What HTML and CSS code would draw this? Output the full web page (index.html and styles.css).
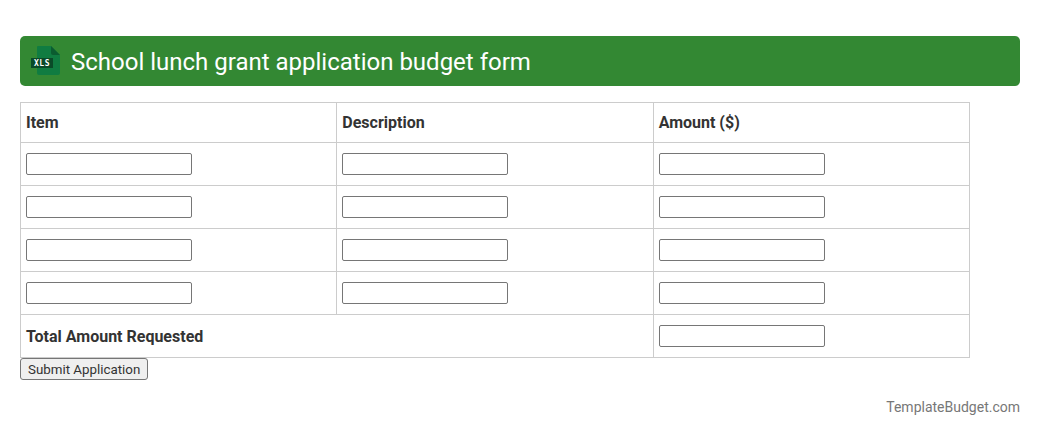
FILE: index.html
```html
<!DOCTYPE html>
<html lang="en">
<head>
    <meta charset="UTF-8">
    <meta name="viewport" content="width=device-width, initial-scale=1.0">
    <title>School lunch grant application budget form</title>
    <link rel="stylesheet" href="styles.css">
</head>
<body>

<div class="container">
    <div class="banner">
        <svg class="file-icon" width="32" height="32" viewBox="0 0 32 32" aria-hidden="true">
            <path d="M8 1H21L30 10V28Q30 30 28 30H9Q7 30 7 28V2Q7 1 8 1Z" fill="#107c41"/>
            <path d="M21 1L30 10H23Q21 10 21 8Z" fill="#0b5c30"/>
            <rect x="1" y="13" width="22" height="10" fill="#0a4a28"/>
            <text x="12" y="20.5" class="file-icon-text" text-anchor="middle">XLS</text>
        </svg>
        <h1>School lunch grant application budget form</h1>
    </div>

    <form>
        <table>
            <tr>
                <th>Item</th>
                <th>Description</th>
                <th>Amount ($)</th>
            </tr>
            <tr>
                <td><input type="text"></td>
                <td><input type="text"></td>
                <td><input type="text"></td>
            </tr>
            <tr>
                <td><input type="text"></td>
                <td><input type="text"></td>
                <td><input type="text"></td>
            </tr>
            <tr>
                <td><input type="text"></td>
                <td><input type="text"></td>
                <td><input type="text"></td>
            </tr>
            <tr>
                <td><input type="text"></td>
                <td><input type="text"></td>
                <td><input type="text"></td>
            </tr>
            <tr>
                <th colspan="2">Total Amount Requested</th>
                <td><input type="text"></td>
            </tr>
        </table>
        <button type="button">Submit Application</button>
    </form>

    <div class="footer">TemplateBudget.com</div>
</div>

</body>
</html>
```

FILE: styles.css
```css
body {
    margin: 0;
    font-family: Roboto, sans-serif;
    font-size: 16px;
    color: #333;
    background-color: #fff;
}
.container {
    padding: 36px 20px 0;
}
.banner {
    display: flex;
    align-items: center;
    gap: 9px;
    height: 50px;
    padding-left: 10px;
    border-radius: 5px;
    background-color: #338833;
}
.banner h1 {
    margin: 0;
    padding-top: 2px;
    font-size: 24px;
    font-weight: 400;
    color: #fff;
}
.file-icon-text {
    font-family: "DejaVu Sans Mono", monospace;
    font-size: 8px;
    font-weight: bold;
    letter-spacing: 0.5px;
    fill: #fff;
}
table {
    width: 950px;
    margin-top: 16px;
    border-collapse: collapse;
    table-layout: fixed;
}
th, td {
    padding: 0 5px;
    border: 1px solid #ccc;
    text-align: left;
    height: 42px;
    box-sizing: border-box;
}
tr:first-child th {
    height: 40px;
}
td {
    height: 43px;
}
input {
    display: block;
    box-sizing: border-box;
    width: 166px;
    height: 22px;
    padding: 1px 2px;
    border: 1px solid #767676;
    border-radius: 2px;
}
button {
    display: block;
    height: 22px;
    padding: 1px 7px;
    font-family: Roboto, sans-serif;
    font-size: 13.33px;
    color: #333;
    background-color: #efefef;
    border: 1px solid #767676;
    border-radius: 3px;
}
.footer {
    margin-top: 19px;
    font-size: 14px;
    color: #777;
    text-align: right;
}
```
